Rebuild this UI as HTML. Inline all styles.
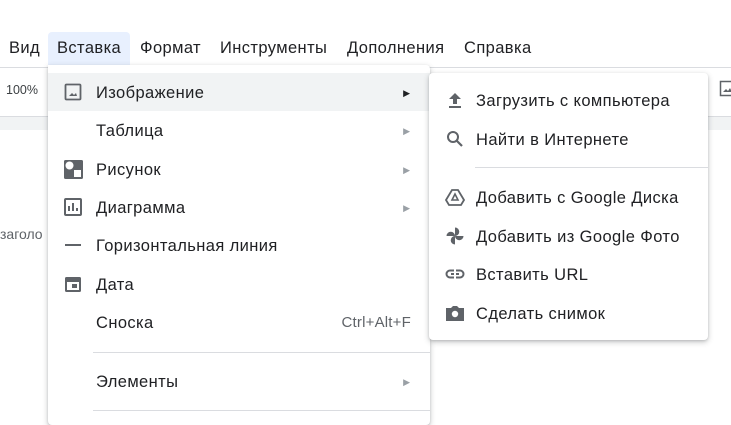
<!DOCTYPE html><html><head><meta charset="utf-8"><style>
*{margin:0;padding:0;box-sizing:border-box}
body{width:731px;height:417px;overflow:hidden;background:#fff;font-family:"Liberation Sans",Roboto,sans-serif;position:relative;color:#202124}
.mb{position:absolute;top:39px;font-size:16.5px;letter-spacing:.4px}
.tab{position:absolute;left:48px;top:32px;width:82px;height:34px;background:#e8f0fe;border-radius:4px 4px 0 0}
.line{position:absolute;left:0;right:0;top:67px;height:1px;background:#dadce0}
.ruler{position:absolute;left:0;right:0;top:116px;height:14px;background:#f1f3f4;border-top:1px solid #dadce0}
.menu{position:absolute;left:48px;top:65px;width:382px;height:360px;background:#fff;border-radius:0 4px 4px 4px;box-shadow:0 2px 6px rgba(60,64,67,.3),0 1px 2px rgba(60,64,67,.15)}
.it{position:absolute;left:0;right:0;height:38px;font-size:16.5px;letter-spacing:.4px;line-height:40px;padding-left:48px;color:#202124}
.it svg{position:absolute;left:15px;top:9px}
.ar{position:absolute;right:20px;top:0;font-size:9px;color:#9aa0a6;letter-spacing:0}
.sep{position:absolute;left:45px;right:0;height:1px;background:#dadce0}
.sub{position:absolute;left:429px;top:73px;width:279px;height:267px;background:#fff;border-radius:4px;box-shadow:0 2px 6px rgba(60,64,67,.3),0 1px 2px rgba(60,64,67,.15)}
.sub .it{padding-left:47px}
.sub .it svg{left:16px}
</style></head><body>
<div class="tab"></div>
<div class="mb" style="left:9px">Вид</div>
<div class="mb" style="left:57px">Вставка</div>
<div class="mb" style="left:140px">Формат</div>
<div class="mb" style="left:220px">Инструменты</div>
<div class="mb" style="left:347px">Дополнения</div>
<div class="mb" style="left:464px">Справка</div>
<div class="line"></div>
<div style="position:absolute;left:6px;top:83px;font-size:12.5px;color:#3c4043">100%</div>
<div class="ruler"></div>
<svg style="position:absolute;left:719px;top:80px" width="14" height="18"><rect x="1.5" y="1.5" width="14" height="14" fill="none" stroke="#5f6368" stroke-width="1.5"/><path d="M4 12l3-3 2 2 2-3 2 4z" fill="#5f6368"/></svg>
<div style="position:absolute;left:0;top:226px;font-size:14px;color:#5f6368">заголо</div>
<div class="menu">
<div class="it" style="top:8px;background:#f1f3f4"><svg width="20" height="20"><rect x="2.5" y="2.5" width="15" height="15" rx="1" fill="none" stroke="#5f6368" stroke-width="1.8"/><path d="M6 14l3-3 2 2 2-2 1 3z" fill="#5f6368"/></svg>Изображение<span class="ar" style="color:#202124">▶</span></div>
<div class="it" style="top:46px">Таблица<span class="ar">▶</span></div>
<div class="it" style="top:85px"><svg width="20" height="20"><rect x="1" y="1" width="19" height="19" rx="1.5" fill="#5f6368"/><circle cx="6.5" cy="6.5" r="4" fill="#fff"/><rect x="11" y="11" width="7" height="7" fill="#fff"/></svg>Рисунок<span class="ar">▶</span></div>
<div class="it" style="top:123px"><svg width="20" height="20"><rect x="2" y="2" width="16" height="16" rx="1" fill="none" stroke="#5f6368" stroke-width="2"/><path d="M6 14V9M10 14V6M14 14v-3" stroke="#5f6368" stroke-width="2"/></svg>Диаграмма<span class="ar">▶</span></div>
<div class="it" style="top:161px"><svg width="20" height="20"><rect x="2" y="9" width="16" height="2" fill="#5f6368"/></svg>Горизонтальная линия</div>
<div class="it" style="top:200px"><svg width="20" height="20"><rect x="2" y="3" width="16" height="15" rx="1.5" fill="#5f6368"/><rect x="4" y="8" width="12" height="8" fill="#fff"/><rect x="9" y="10" width="5" height="4" fill="#5f6368"/></svg>Дата</div>
<div class="it" style="top:238px">Сноска<span class="ar" style="font-size:15px;color:#5f6368;right:19px;letter-spacing:.2px">Ctrl+Alt+F</span></div>
<div class="sep" style="top:287px"></div>
<div class="it" style="top:297px">Элементы<span class="ar">▶</span></div>
<div class="sep" style="top:345px"></div>
</div>
<div class="sub">
<div class="it" style="top:8px"><svg width="20" height="20"><path d="M10 3l-6 6h4v5h4V9h4z M4 16h12v2H4z" fill="#5f6368"/></svg>Загрузить с компьютера</div>
<div class="it" style="top:47px"><svg width="20" height="20"><circle cx="8" cy="8" r="5" fill="none" stroke="#5f6368" stroke-width="2"/><path d="M11.5 11.5L17 17" stroke="#5f6368" stroke-width="2.2"/></svg>Найти в Интернете</div>
<div class="sep" style="top:94px;left:46px"></div>
<div class="it" style="top:105px"><svg width="20" height="20"><path d="M7 3h6l6 10-3 5H4l-3-5z" fill="none" stroke="#5f6368" stroke-width="1.8"/><path d="M10 7l-3 6h6z" fill="none" stroke="#5f6368" stroke-width="1.6"/></svg>Добавить с Google Диска</div>
<div class="it" style="top:144px"><svg width="20" height="20"><g fill="#5f6368"><path d="M10 10V1.5a4.25 4.25 0 0 1 0 8.5z"/><path d="M10 10V1.5a4.25 4.25 0 0 1 0 8.5z" transform="rotate(90 10 10)"/><path d="M10 10V1.5a4.25 4.25 0 0 1 0 8.5z" transform="rotate(180 10 10)"/><path d="M10 10V1.5a4.25 4.25 0 0 1 0 8.5z" transform="rotate(270 10 10)"/></g></svg>Добавить из Google Фото</div>
<div class="it" style="top:182px"><svg width="20" height="20"><rect x="1.5" y="6.5" width="17" height="7" rx="3.5" fill="none" stroke="#5f6368" stroke-width="2"/><rect x="6" y="9" width="8" height="2" fill="#5f6368"/><rect x="9" y="5" width="2" height="10" fill="#fff"/></svg>Вставить URL</div>
<div class="it" style="top:221px"><svg width="20" height="20"><path d="M1 5h5l2-2h4l2 2h5v13H1z" fill="#5f6368"/><circle cx="10" cy="11" r="3.2" fill="#fff"/></svg>Сделать снимок</div>
</div>
</body></html>
